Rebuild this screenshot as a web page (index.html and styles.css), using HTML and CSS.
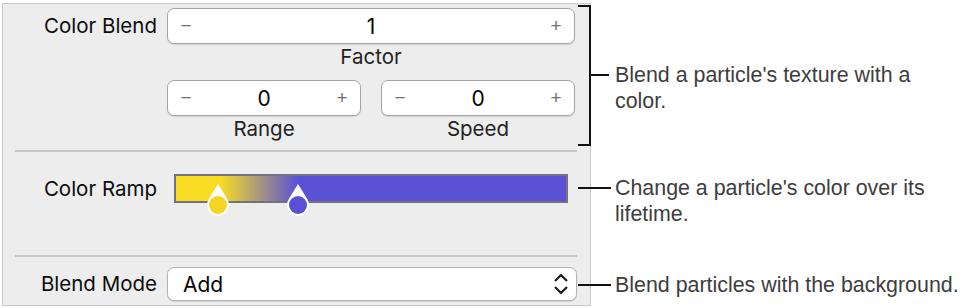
FILE: index.html
```html
<!DOCTYPE html>
<html>

<head>
    <meta charset="UTF-8">
    <title>Particle Color</title>
    <link rel="stylesheet" href="styles.css">
</head>

<body>
    <div class="page">
        <div class="panel">
            <section class="group group-blend">
                <div class="row">
                    <span class="label">Color Blend</span>
                    <div class="controls">
                        <div class="field">
                            <div class="stepper">
                                <span class="step">−</span>
                                <span class="value">1</span>
                                <span class="step">+</span>
                            </div>
                            <span class="caption">Factor</span>
                        </div>
                        <div class="pair">
                            <div class="field">
                                <div class="stepper">
                                    <span class="step">−</span>
                                    <span class="value">0</span>
                                    <span class="step">+</span>
                                </div>
                                <span class="caption">Range</span>
                            </div>
                            <div class="field">
                                <div class="stepper">
                                    <span class="step">−</span>
                                    <span class="value">0</span>
                                    <span class="step">+</span>
                                </div>
                                <span class="caption">Speed</span>
                            </div>
                        </div>
                    </div>
                </div>
            </section>
            <hr class="divider">
            <section class="group group-ramp">
                <div class="row row-center">
                    <span class="label">Color Ramp</span>
                    <div class="ramp">
                        <svg class="thumb thumb-yellow" width="24" height="34" viewBox="0 0 24 34">
                            <path d="M12 1 L21.18 15.95 A11 11 0 1 1 2.82 15.95 Z" fill="#fff" />
                            <circle cx="12" cy="22" r="9" fill="#f5d422" />
                        </svg>
                        <svg class="thumb thumb-purple" width="24" height="34" viewBox="0 0 24 34">
                            <path d="M12 1 L21.18 15.95 A11 11 0 1 1 2.82 15.95 Z" fill="#fff" />
                            <circle cx="12" cy="22" r="9" fill="#5a50d4" />
                        </svg>
                    </div>
                </div>
            </section>
            <hr class="divider">
            <section class="group group-mode">
                <div class="row row-center">
                    <span class="label">Blend Mode</span>
                    <div class="popup">
                        <span class="popup-value">Add</span>
                        <svg class="chevrons" width="18" height="22" viewBox="0 0 18 22">
                            <path d="M3 8 L9 2 L15 8" fill="none" stroke="#1e1e1e" stroke-width="2.2" />
                            <path d="M3 14 L9 20 L15 14" fill="none" stroke="#1e1e1e" stroke-width="2.2" />
                        </svg>
                    </div>
                </div>
            </section>
        </div>

        <div class="notes">
            <div class="note note-blend">
                <div class="bracket"></div>
                <div class="tick"></div>
                <p class="note-text note-text-top">Blend a particle's texture with a color.</p>
            </div>
            <div class="note note-ramp">
                <div class="connector"></div>
                <p class="note-text">Change a particle's color over its lifetime.</p>
            </div>
            <div class="note note-mode">
                <div class="connector"></div>
                <p class="note-text wide">Blend particles with the background.</p>
            </div>
        </div>
    </div>
</body>

</html>
```

FILE: styles.css
```css
body,
html {
    margin: 0;
    padding: 0;
    background-color: #fff;
    font-family: Inter, "Liberation Sans", sans-serif;
}

.page {
    display: flex;
    width: 975px;
    height: 308px;
    overflow: hidden;
}

/* inspector panel */
.panel {
    box-sizing: border-box;
    flex: none;
    width: 589px;
    height: 303px;
    margin: 3px 0 0 2px;
    border: 1px solid #c9c9c9;
    background-color: #ededed;
    display: flex;
    flex-direction: column;
}

.group-blend {
    padding: 4px 0 8px 0;
}

.group-ramp {
    box-sizing: border-box;
    height: 105px;
    padding-top: 19px;
}

.group-mode {
    padding: 9px 0 3px 0;
}

.divider {
    margin: 0 13px 0 12px;
    height: 2px;
    border: none;
    background-color: #c6c6c6;
}

.row {
    display: grid;
    grid-template-columns: 154px 408px;
    column-gap: 10px;
    align-items: start;
}

.row-center {
    align-items: center;
}

.label {
    text-align: right;
    font-size: 20.5px;
    line-height: 36px;
    color: #0c0c0c;
}

.controls {
    display: flex;
    flex-direction: column;
    gap: 10px;
}

.pair {
    display: grid;
    grid-template-columns: 1fr 1fr;
    column-gap: 20px;
}

.field {
    display: flex;
    flex-direction: column;
    align-items: center;
}

.stepper {
    box-sizing: border-box;
    width: 100%;
    height: 36px;
    display: flex;
    align-items: center;
    justify-content: space-between;
    padding: 0 12px 0 12px;
    background-color: #fff;
    border: 1px solid #a6a6a6;
    border-radius: 7px;
    box-shadow: 0 1px 1px rgba(0, 0, 0, 0.12);
}

.step {
    width: 12px;
    text-align: center;
    font-family: "Liberation Sans", sans-serif;
    font-size: 19px;
    color: #707070;
}

.value {
    font-size: 21px;
    color: #050505;
}

.caption {
    font-size: 20.5px;
    line-height: 26px;
    color: #222;
}

/* color ramp */
.ramp {
    position: relative;
    box-sizing: border-box;
    width: 394px;
    height: 29px;
    margin-left: 7px;
    border: 2px solid #72727c;
    background: linear-gradient(to right, #f9dd25 0, #f9dd25 44px, #5a51d6 122px, #5a51d6 100%);
}

.thumb {
    position: absolute;
    top: 7px;
}

.thumb-yellow {
    left: 30px;
}

.thumb-purple {
    left: 110px;
}

/* popup button */
.popup {
    box-sizing: border-box;
    width: 410px;
    height: 34px;
    display: flex;
    align-items: center;
    justify-content: space-between;
    padding: 0 6px 0 15px;
    background-color: #fff;
    border: 1px solid #b2b2b2;
    border-radius: 7px;
    box-shadow: 0 1px 1px rgba(0, 0, 0, 0.12);
}

.popup-value {
    font-size: 21px;
    color: #050505;
}

/* callouts */
.notes {
    position: relative;
    display: flex;
    flex-direction: column;
    margin-left: -13px;
    font-family: "Liberation Sans", Arial, sans-serif;
    font-size: 21.4px;
    color: #3d3d3d;
}

.note {
    display: flex;
    align-items: flex-start;
}

.note-blend {
    margin-top: 5px;
}

.note-ramp {
    margin-top: 29px;
}

.note-mode {
    margin-top: 45px;
}

.bracket {
    width: 11px;
    height: 137px;
    border: 2px solid #111;
    border-left: none;
}

.tick {
    width: 18px;
    height: 2px;
    margin-top: 69px;
    background-color: #111;
}

.connector {
    flex: none;
    width: 33px;
    height: 26px;
    background: linear-gradient(#111, #111) center / 100% 2px no-repeat;
}

.note-text {
    margin: 0 0 0 4px;
    line-height: 26px;
    max-width: 322px;
}

.note-text-top {
    margin: 57px 0 0 6px;
}

.note-text.wide {
    max-width: none;
    white-space: nowrap;
}
```
